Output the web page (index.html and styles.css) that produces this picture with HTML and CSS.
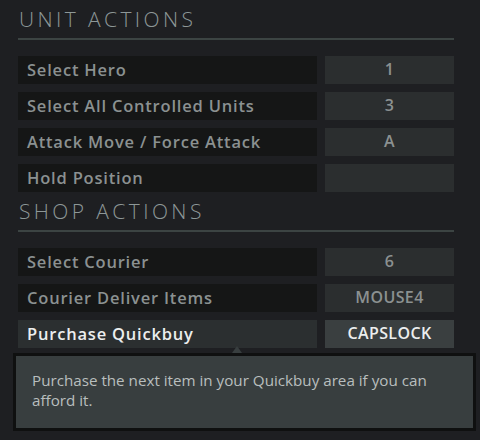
FILE: index.html
```html
<!DOCTYPE html>
<html>
<head>
<meta charset="utf-8">
<link rel="stylesheet" href="styles.css">
</head>
<body>
<div class="panel">
  <section class="group">
    <h2 class="heading">UNIT ACTIONS</h2>
    <div class="rows">
      <div class="row"><div class="label">Select Hero</div><div class="key">1</div></div>
      <div class="row"><div class="label">Select All Controlled Units</div><div class="key">3</div></div>
      <div class="row"><div class="label">Attack Move / Force Attack</div><div class="key">A</div></div>
      <div class="row"><div class="label">Hold Position</div><div class="key"></div></div>
    </div>
  </section>
  <section class="group">
    <h2 class="heading">SHOP ACTIONS</h2>
    <div class="rows">
      <div class="row"><div class="label">Select Courier</div><div class="key">6</div></div>
      <div class="row"><div class="label">Courier Deliver Items</div><div class="key">MOUSE4</div></div>
      <div class="row active">
        <div class="label">Purchase Quickbuy</div><div class="key">CAPSLOCK</div>
        <div class="tooltip">Purchase the next item in your Quickbuy area if you can afford it.</div>
      </div>
    </div>
  </section>
</div>
</body>
</html>
```
FILE: styles.css
```css
html, body {
  margin: 0;
  padding: 0;
  background: #1e1f22;
  width: 480px;
  height: 440px;
  overflow: hidden;
}
.panel {
  padding-left: 18px;
  width: 436px;
  font-family: "Open Sans", "Noto Sans", sans-serif;
}
.heading {
  margin: 0 0 16px 0;
  height: 38px;
  box-sizing: content-box;
  border-bottom: 2px solid #3c4443;
  font-weight: 300;
  font-size: 21px;
  line-height: 38px;
  letter-spacing: 3.4px;
  color: #8d9797;
  padding-left: 1px;
}
.rows {
  display: flex;
  flex-direction: column;
  gap: 8px;
}
.row {
  display: flex;
  gap: 8px;
  height: 28px;
  position: relative;
}
.label {
  width: 299px;
  background: #151616;
  color: #8b9191;
  font-weight: 600;
  font-size: 16.5px;
  line-height: 27px;
  padding-left: 9px;
  box-sizing: border-box;
  letter-spacing: 0.8px;
}
.key {
  width: 129px;
  background: #2b2e2f;
  color: #8b9191;
  font-weight: 600;
  font-size: 16px;
  line-height: 27px;
  text-align: center;
  letter-spacing: 0.4px;
}
.row.active .label {
  background: #2b2f30;
  color: #eceeee;
}
.row.active .key {
  background: #3a3f40;
  color: #eceeee;
}
.tooltip {
  position: absolute;
  left: -5px;
  top: 33px;
  width: 463px;
  box-sizing: border-box;
  background: #383e3f;
  border: 3px solid #0f1010;
  padding: 14px 16px 18px 16px;
  color: #b9bebe;
  font-size: 15.2px;
  line-height: 20px;
  font-weight: 400;
}
.tooltip::before {
  content: "";
  position: absolute;
  left: 216px;
  top: -10px;
  border-left: 5px solid transparent;
  border-right: 5px solid transparent;
  border-bottom: 7px solid #383e3f;
}
```
